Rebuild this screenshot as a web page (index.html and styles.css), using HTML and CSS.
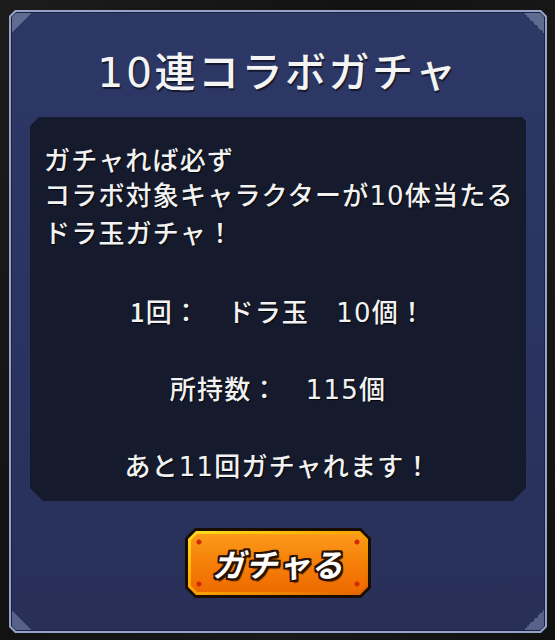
FILE: index.html
```html
<!DOCTYPE html>
<html lang="ja">
<head>
<meta charset="utf-8">
<title>10連コラボガチャ</title>
<link rel="stylesheet" href="styles.css">
</head>
<body>
<div class="frame">
  <div class="frame-line">
    <div class="panel">
      <span class="corner tl"></span>
      <span class="corner tr"></span>
      <span class="corner bl"></span>
      <span class="corner br"></span>
      <h1 class="title"><span class="num">10</span>連コラボガチャ</h1>
      <div class="info">
        <p class="intro">ガチャれば必ず<br>コラボ対象キャラクターが<span class="num">10</span>体当たる<br>ドラ玉ガチャ！</p>
        <p class="line first">1回：　ドラ玉　<span class="num">10</span>個！</p>
        <p class="line">所持数：　<span class="num">115</span>個</p>
        <p class="line">あと<span class="num">11</span>回ガチャれます！</p>
      </div>
      <button class="btn" type="button">
        <span class="btn-border">
          <span class="btn-face">ガチャる</span>
        </span>
      </button>
    </div>
  </div>
</div>
</body>
</html>
```
FILE: styles.css
```css
html, body {
  margin: 0;
  padding: 0;
}
body {
  width: 555px;
  height: 640px;
  overflow: hidden;
  background: linear-gradient(120deg, #1c1c1c 0%, #121212 40%, #191919 70%, #101010 100%);
  font-family: "Noto Sans CJK JP", "Noto Sans", sans-serif;
}
.num {
  font-family: "DejaVu Sans", "Noto Sans CJK JP", sans-serif;
}
.frame {
  box-sizing: border-box;
  width: 538px;
  height: 623px;
  margin: 10px 0 0 9px;
  padding: 2px;
  background: #95a3c9;
  clip-path: polygon(6px 0, calc(100% - 6px) 0, 100% 6px, 100% calc(100% - 6px), calc(100% - 6px) 100%, 6px 100%, 0 calc(100% - 6px), 0 6px);
}
.frame-line {
  box-sizing: border-box;
  height: 100%;
  padding: 1px;
  background: #1b2242;
  clip-path: polygon(5px 0, calc(100% - 5px) 0, 100% 5px, 100% calc(100% - 5px), calc(100% - 5px) 100%, 5px 100%, 0 calc(100% - 5px), 0 5px);
}
.panel {
  position: relative;
  box-sizing: border-box;
  height: 100%;
  padding-top: 30px;
  display: flex;
  flex-direction: column;
  align-items: center;
  background: linear-gradient(180deg, #2d3866 0%, #2a3461 50%, #283058 100%);
  clip-path: polygon(4px 0, calc(100% - 4px) 0, 100% 4px, 100% calc(100% - 4px), calc(100% - 4px) 100%, 4px 100%, 0 calc(100% - 4px), 0 4px);
}
.corner {
  position: absolute;
  width: 20px;
  height: 20px;
}
.corner.tl { top: 0; left: 0; background: linear-gradient(135deg, #5f6b8f 50%, transparent 50%); }
.corner.tr { top: 0; right: 0; background: linear-gradient(225deg, #5f6b8f 50%, transparent 50%); }
.corner.bl { bottom: 0; left: 0; background: linear-gradient(45deg, #56628a 50%, transparent 50%); }
.corner.br { bottom: 0; right: 0; background: linear-gradient(315deg, #56628a 50%, transparent 50%); }

.title {
  margin: 0;
  height: 52px;
  line-height: 52px;
  font-size: 41px;
  font-weight: 500;
  letter-spacing: 2.5px;
  color: #f4f4f4;
  text-shadow: 1px 2px 1px rgba(0, 0, 0, 0.55);
}
.info {
  box-sizing: border-box;
  width: 496px;
  height: 384px;
  margin-top: 22px;
  padding: 24px 0 0 14px;
  display: flex;
  flex-direction: column;
  background: #151b2d;
  clip-path: polygon(9px 0, calc(100% - 4px) 0, 100% 4px, 100% calc(100% - 13px), calc(100% - 13px) 100%, 13px 100%, 0 calc(100% - 13px), 0 9px);
  color: #f2f2f2;
  font-size: 26px;
  font-weight: 500;
  letter-spacing: 1.2px;
  text-shadow: 1px 1px 1px rgba(0, 0, 0, 0.8);
}
.intro {
  margin: 0;
  line-height: 35px;
}
.line {
  margin: 39px 14px 0 0;
  line-height: 36px;
  text-align: center;
}
.line.first {
  margin-top: 44px;
}
.btn {
  margin-top: 27px;
  width: 186px;
  height: 70px;
  padding: 3px;
  border: 0;
  background: #1a0c00;
  clip-path: polygon(10px 0, calc(100% - 10px) 0, 100% 10px, 100% calc(100% - 10px), calc(100% - 10px) 100%, 10px 100%, 0 calc(100% - 10px), 0 10px);
  font-family: "Noto Sans CJK JP", sans-serif;
  cursor: pointer;
}
.btn-border {
  display: block;
  box-sizing: border-box;
  height: 100%;
  padding: 3px;
  background: linear-gradient(160deg, #ffe020 0%, #ffb400 35%, #f08a00 70%, #e06000 100%);
  clip-path: polygon(8px 0, calc(100% - 8px) 0, 100% 8px, 100% calc(100% - 8px), calc(100% - 8px) 100%, 8px 100%, 0 calc(100% - 8px), 0 8px);
}
.btn-face {
  display: flex;
  align-items: center;
  justify-content: center;
  height: 100%;
  background:
    radial-gradient(circle at 8px 8px, #d42a00 2px, transparent 3px),
    radial-gradient(circle at calc(100% - 8px) 8px, #d42a00 2px, transparent 3px),
    radial-gradient(circle at 8px calc(100% - 8px), #d42a00 2px, transparent 3px),
    radial-gradient(circle at calc(100% - 8px) calc(100% - 8px), #d42a00 2px, transparent 3px),
    linear-gradient(180deg, #fb9a1c 0%, #f6820a 45%, #ee6a00 100%);
  clip-path: polygon(6px 0, calc(100% - 6px) 0, 100% 6px, 100% calc(100% - 6px), calc(100% - 6px) 100%, 6px 100%, 0 calc(100% - 6px), 0 6px);
  color: #ffffff;
  font-size: 32px;
  font-weight: 700;
  font-style: italic;
  letter-spacing: 1px;
  text-shadow:
    -2px -2px 0 #2a1200, 2px -2px 0 #2a1200, -2px 2px 0 #2a1200, 2px 2px 0 #2a1200,
    0 -2px 0 #2a1200, 0 2px 0 #2a1200, -2px 0 0 #2a1200, 2px 0 0 #2a1200,
    2px 3px 1px rgba(0, 0, 0, 0.6);
}
```
